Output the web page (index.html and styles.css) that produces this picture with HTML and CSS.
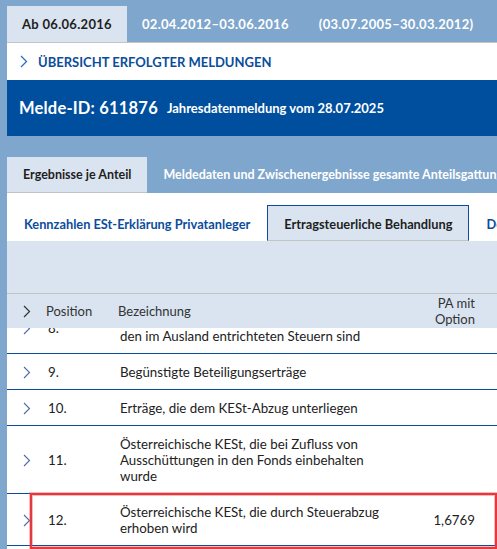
FILE: index.html
```html
<!DOCTYPE html>
<html lang="de">
<head>
  <meta charset="UTF-8">
  <meta name="viewport" content="width=device-width, initial-scale=1.0">
  <title>Meldung 611876</title>
  <link rel="stylesheet" href="styles.css">
</head>
<body>
  <div class="page">
    <div class="period-tabs">
      <div class="period-tab active">Ab 06.06.2016</div>
      <div class="period-tab">02.04.2012–03.06.2016</div>
      <div class="period-tab">(03.07.2005–30.03.2012)</div>
      <div class="period-tab">(bis 02.07.2005)</div>
    </div>

    <div class="overview">
      <svg class="chevron" width="8" height="13" viewBox="0 0 8 13"><polyline points="1,1 6.5,6.5 1,12" fill="none" stroke="#2a6fc0" stroke-width="1.3"/></svg>
      <span>ÜBERSICHT ERFOLGTER MELDUNGEN</span>
    </div>

    <div class="melde">
      <span class="melde-id">Melde-ID: 611876</span>
      <span class="melde-type">Jahresdatenmeldung vom 28.07.2025</span>
    </div>

    <div class="result-tabs">
      <div class="result-tab active">Ergebnisse je Anteil</div>
      <div class="result-tab">Meldedaten und Zwischenergebnisse gesamte Anteilsgattung</div>
    </div>

    <div class="subtabs">
      <div class="subtab">Kennzahlen ESt-Erklärung Privatanleger</div>
      <div class="subtab active">Ertragsteuerliche Behandlung</div>
      <div class="subtab">Details</div>
    </div>

    <div class="band"></div>

    <div class="table">
      <div class="row head">
        <div class="cell toggle">
          <svg width="8" height="13" viewBox="0 0 8 13"><polyline points="1,1 6.5,6.5 1,12" fill="none" stroke="#333" stroke-width="1.2"/></svg>
        </div>
        <div class="cell pos">Position</div>
        <div class="cell name">Bezeichnung</div>
        <div class="cell value">PA mit<br>Option</div>
      </div>

      <div class="body">
        <div class="row scrolled">
          <div class="cell toggle">
            <svg width="8" height="13" viewBox="0 0 8 13"><polyline points="1,1 6.5,6.5 1,12" fill="none" stroke="#4f6aa8" stroke-width="1.1"/></svg>
          </div>
          <div class="cell pos">8.</div>
          <div class="cell name">Erträge, die Abzugssteuern unterliegen, die<br>den im Ausland entrichteten Steuern sind</div>
          <div class="cell value"></div>
        </div>
        <div class="row">
          <div class="cell toggle">
            <svg width="8" height="13" viewBox="0 0 8 13"><polyline points="1,1 6.5,6.5 1,12" fill="none" stroke="#4f6aa8" stroke-width="1.1"/></svg>
          </div>
          <div class="cell pos">9.</div>
          <div class="cell name">Begünstigte Beteiligungserträge</div>
          <div class="cell value"></div>
        </div>
        <div class="row">
          <div class="cell toggle">
            <svg width="8" height="13" viewBox="0 0 8 13"><polyline points="1,1 6.5,6.5 1,12" fill="none" stroke="#4f6aa8" stroke-width="1.1"/></svg>
          </div>
          <div class="cell pos">10.</div>
          <div class="cell name">Erträge, die dem KESt-Abzug unterliegen</div>
          <div class="cell value"></div>
        </div>
        <div class="row">
          <div class="cell toggle">
            <svg width="8" height="13" viewBox="0 0 8 13"><polyline points="1,1 6.5,6.5 1,12" fill="none" stroke="#4f6aa8" stroke-width="1.1"/></svg>
          </div>
          <div class="cell pos">11.</div>
          <div class="cell name">Österreichische KESt, die bei Zufluss von Ausschüttungen in den Fonds einbehalten wurde</div>
          <div class="cell value"></div>
        </div>
        <div class="row marked">
          <div class="cell toggle">
            <svg width="8" height="13" viewBox="0 0 8 13"><polyline points="1,1 6.5,6.5 1,12" fill="none" stroke="#4f6aa8" stroke-width="1.1"/></svg>
          </div>
          <div class="cell pos">12.</div>
          <div class="cell name">Österreichische KESt, die durch Steuerabzug erhoben wird</div>
          <div class="cell value">1,6769</div>
          <div class="highlight"></div>
        </div>
      </div>
    </div>
  </div>
</body>
</html>
```

FILE: styles.css
```css
body {
  margin: 0;
  background-color: #7fa6cc;
  font-family: Lato, "Noto Sans", sans-serif;
  color: #222;
}

.page {
  padding-left: 7px;
  width: 490px;
  height: 549px;
  overflow: hidden;
}

.period-tabs {
  display: flex;
  padding-top: 6px;
  border-bottom: 1px solid #c3c3c3;
  white-space: nowrap;
}

.period-tab {
  height: 36px;
  line-height: 36px;
  padding: 0 15px;
  font-size: 13px;
  font-weight: 700;
  letter-spacing: 0.3px;
  color: #fff;
}

.period-tab.active {
  background: #d9e4f0;
  color: #1e1e1e;
}

.overview {
  display: flex;
  align-items: center;
  gap: 10px;
  height: 37px;
  padding-left: 13px;
  background: #fff;
  font-size: 13px;
  font-weight: 700;
  color: #0b4d9c;
}

.melde {
  display: flex;
  align-items: center;
  gap: 9px;
  height: 56px;
  padding-left: 12px;
  background: #004f9e;
  color: #fff;
  font-weight: 700;
  white-space: nowrap;
}

.melde-id {
  font-size: 16.5px;
  letter-spacing: 0.2px;
}

.melde-type {
  font-size: 13px;
}

.result-tabs {
  display: flex;
  margin-top: 21px;
  white-space: nowrap;
}

.result-tab {
  height: 35px;
  line-height: 35px;
  padding: 0 16px;
  font-size: 12.5px;
  font-weight: 700;
  color: #fff;
}

.result-tab.active {
  background: #d9e4f0;
  border-bottom: 1px solid #c3c3c3;
  color: #1e1e1e;
}

.subtabs {
  display: flex;
  align-items: flex-end;
  height: 48px;
  background: #fff;
  white-space: nowrap;
}

.subtab {
  height: 35px;
  line-height: 36px;
  padding: 0 16px;
  font-size: 12.8px;
  font-weight: 700;
  color: #0b4d9c;
  border: 1px solid transparent;
  border-bottom: none;
}

.subtab.active {
  background: #d9e4f0;
  border-color: #0b4d9c;
  border-bottom: 1px solid #c3c3c3;
  color: #1e1e1e;
  height: 34px;
}

.band {
  height: 52px;
  background: #d9e4f0;
  border-bottom: 1px solid #c3c3c3;
}

.table {
  background: #fff;
  font-size: 13.3px;
  line-height: 16px;
}

.row {
  display: flex;
  align-items: center;
  border-bottom: 1px solid #0b4d9c;
  position: relative;
}

.row.head {
  height: 34px;
  background: #d9e4f0;
  border-bottom: none;
  color: #333;
  font-size: 13px;
  z-index: 1;
}

.body {
  height: 230px;
  overflow: hidden;
}

.row.scrolled {
  margin-top: -26px;
}

.cell {
  padding-top: 10px;
  padding-bottom: 9px;
}

.head .cell {
  padding-top: 9px;
}

.toggle {
  width: 39px;
  display: flex;
  justify-content: center;
}

.toggle svg {
  display: block;
}

.pos {
  width: 72px;
  flex: none;
}

.row:not(.head) .pos {
  padding-left: 2px;
  width: 70px;
}

.name {
  width: 262px;
  flex: none;
}

.row:not(.head) .name {
  padding-left: 2px;
  width: 260px;
}

.value {
  flex: 1;
  text-align: right;
  padding-right: 22px;
}

.highlight {
  position: absolute;
  left: 23px;
  top: -1px;
  right: 0;
  bottom: -4px;
  border: 2px solid #e5393d;
  box-shadow: inset 0 0 0 1px rgba(229, 57, 61, 0.35), 0 0 0 1px rgba(229, 57, 61, 0.35);
  pointer-events: none;
}
```
